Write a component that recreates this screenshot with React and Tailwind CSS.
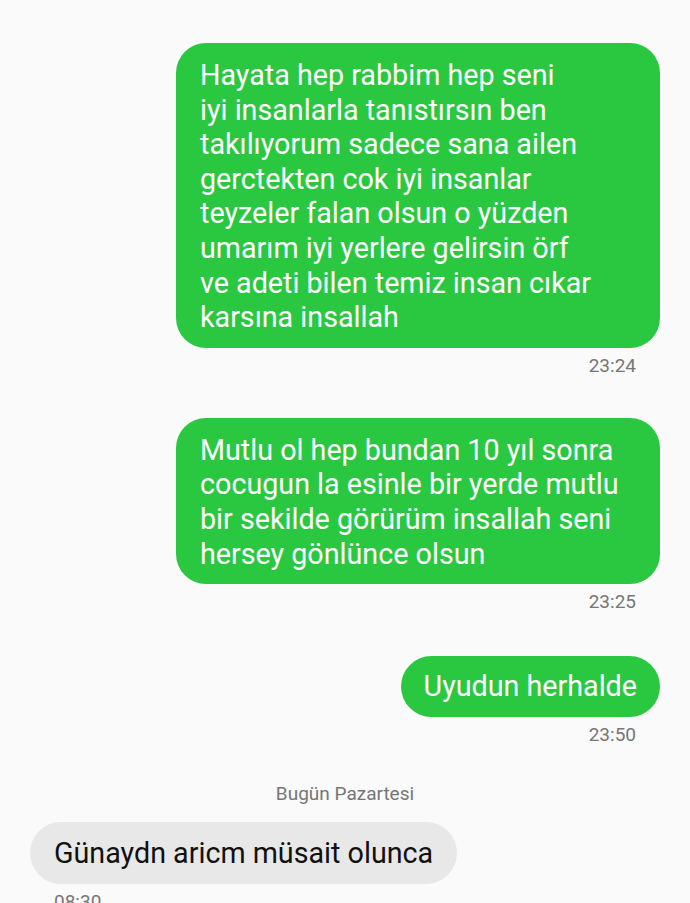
export default function App() {
  const bubble = "rounded-[30px] bg-[#2ac840] text-[28.7px] leading-[34.6px] text-white";
  const time = "pt-[6px] text-[19px] leading-[24px] text-[#767676]";
  return (
    <div className="h-[903px] w-[690px] overflow-hidden bg-[#fafafa] font-[Roboto,sans-serif]">
      <div className="flex flex-col pt-[43px]">
        <div className="flex justify-end pr-[30px]">
          <div className={`w-[484px] pl-[24px] pr-[12px] pt-[15px] pb-[13px] ${bubble}`}>
            Hayata hep rabbim hep seni
            <br />
            iyi insanlarla tanıstırsın ben
            <br />
            takılıyorum sadece sana ailen
            <br />
            gerctekten cok iyi insanlar
            <br />
            teyzeler falan olsun o yüzden
            <br />
            umarım iyi yerlere gelirsin örf
            <br />
            ve adeti bilen temiz insan cıkar
            <br />
            karsına insallah
          </div>
        </div>
        <div className={`flex justify-end pr-[54px] ${time}`}>23:24</div>

        <div className="mt-[40px] flex justify-end pr-[30px]">
          <div className={`w-[484px] pl-[24px] pr-[12px] pt-[15px] pb-[13px] ${bubble}`}>
            Mutlu ol hep bundan 10 yıl sonra
            <br />
            cocugun la esinle bir yerde mutlu
            <br />
            bir sekilde görürüm insallah seni
            <br />
            hersey gönlünce olsun
          </div>
        </div>
        <div className={`flex justify-end pr-[54px] ${time}`}>23:25</div>

        <div className="mt-[42px] flex justify-end pr-[30px]">
          <div className={`rounded-full px-[23px] py-[13px] ${bubble}`}>Uyudun herhalde</div>
        </div>
        <div className={`flex justify-end pr-[54px] ${time}`}>23:50</div>

        <div className="mt-[35px] flex justify-center text-[19px] leading-[24px] text-[#767676]">Bugün Pazartesi</div>

        <div className="mt-[16px] flex justify-start pl-[30px]">
          <div className="rounded-full bg-[#e8e8e8] px-[24px] py-[14px] text-[28.7px] leading-[34.6px] text-[#111]">
            Günaydn aricm müsait olunca
          </div>
        </div>
        <div className={`flex justify-start pl-[54px] ${time}`}>08:30</div>
      </div>
    </div>
  );
}
